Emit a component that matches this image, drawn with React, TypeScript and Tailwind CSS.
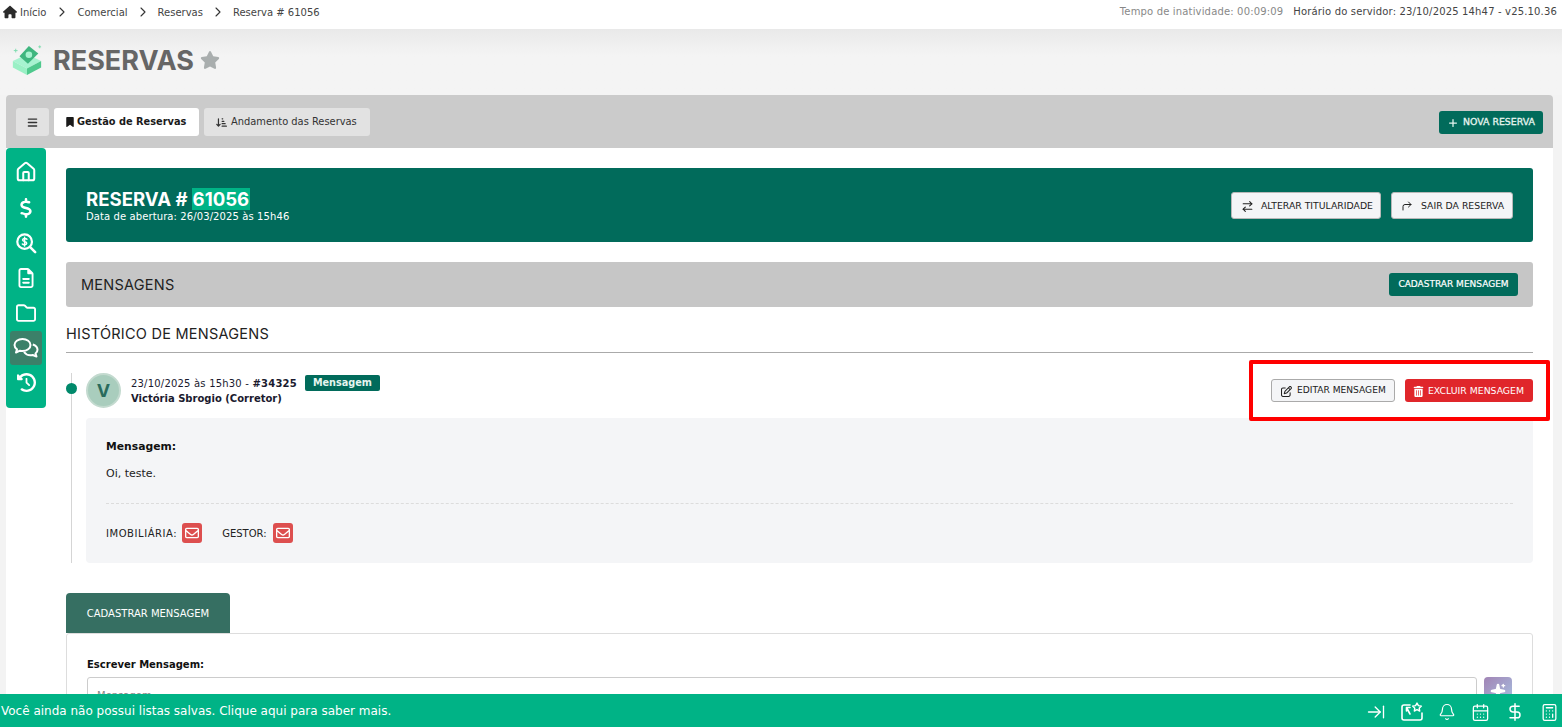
import {
  ArrowRightLeft,
  ArrowRightToLine,
  Bell,
  Calculator,
  CalendarDays,
  ChevronRight,
  CornerUpRight,
  DollarSign,
  House,
  Sparkles,
} from 'lucide-react'
import {
  FaArrowDownShortWide,
  FaBars,
  FaBookmark,
  FaClockRotateLeft,
  FaDollarSign,
  FaHouse,
  FaPlus,
  FaRegEnvelope,
  FaRegFileLines,
  FaRegFolder,
  FaRegPenToSquare,
  FaStar,
  FaTrashCan,
} from 'react-icons/fa6'

const body = "font-['DejaVu_Sans',Verdana,sans-serif]"
const heading = "font-['Inter',sans-serif]"

function Logo() {
  return (
    <svg width="32" height="32" viewBox="0 0 34 34" className="shrink-0">
      <path d="M2 18 L17 11 L32 18 L17 26 Z" fill="#a7f3d0" />
      <path d="M2 18 L17 26 V33 L2 25 Z" fill="#9af0c5" />
      <path d="M17 26 L32 18 V25 L17 33 Z" fill="#4fc98d" />
      <path d="M9 13 L19 2 L29 10 L18 21 Z" fill="#3fb67f" />
      <circle cx="19" cy="11.5" r="3.5" fill="#a7f3d0" />
      <path d="M3 7 h4 M5 5 v4 M29 3 h3 M30.5 1.5 v3" stroke="#7ddcaf" strokeWidth="1" />
    </svg>
  )
}

function SearchDollar() {
  return (
    <svg width="22" height="22" viewBox="0 0 24 24" fill="none" stroke="currentColor" strokeWidth="2.4" strokeLinecap="round">
      <circle cx="10.5" cy="10.5" r="8" />
      <path d="M16.5 16.5 L22 22" strokeWidth="2.8" />
      <path d="M13 7.8 C12 6.8 8.3 6.6 8.3 8.8 C8.3 11 12.8 9.8 12.8 12.2 C12.8 14.3 9 14.2 8 13.2 M10.5 5.6 V15.4" strokeWidth="1.6" />
    </svg>
  )
}

function Chats() {
  return (
    <svg width="26" height="22" viewBox="0 0 26 22" fill="none" stroke="currentColor" strokeWidth="2" strokeLinejoin="round">
      <path d="M9.5 2 C5 2 1.5 4.6 1.5 8 C1.5 9.8 2.5 11.3 4 12.4 L3 15.5 L7 13.7 C7.8 13.9 8.6 14 9.5 14 C14 14 17.5 11.4 17.5 8 C17.5 4.6 14 2 9.5 2 Z" />
      <path d="M19.8 7.5 C22.6 8.4 24.5 10.4 24.5 12.8 C24.5 14.3 23.7 15.6 22.5 16.6 L23.5 19.6 L19.7 18 C16.5 18.6 12.8 17.6 11 15" />
    </svg>
  )
}

function ListStar() {
  return (
    <svg width="22" height="20" viewBox="0 0 22 20" fill="none" stroke="currentColor" strokeWidth="1.6" strokeLinecap="round" strokeLinejoin="round">
      <path d="M9 3 H3 A2 2 0 0 0 1 5 V16 A2 2 0 0 0 3 18 H19 A2 2 0 0 0 21 16 V11" />
      <path d="M6 12 L2.5 5.5 M2.5 5.5 V9 M2.5 5.5 H6" transform="translate(3 0)" />
      <path d="M16 1 L17.4 3.6 L20.4 4.1 L18.2 6.2 L18.7 9 L16 7.7 L13.3 9 L13.8 6.2 L11.6 4.1 L14.6 3.6 Z" strokeWidth="1.4" />
    </svg>
  )
}

function SideItem({ children, active }: { children: React.ReactNode; active?: boolean }) {
  return (
    <div className={`flex h-[34px] w-[32px] items-center justify-center rounded-[3px] text-white ${active ? 'bg-[#3b8069]' : ''}`}>
      {children}
    </div>
  )
}

function Crumb({ children }: { children: React.ReactNode }) {
  return (
    <>
      <ChevronRight size={16} strokeWidth={1.6} className="mx-[7px] text-[#333]" />
      <span>{children}</span>
    </>
  )
}

export default function App() {
  return (
    <div className={`${body} relative flex h-[727px] w-[1562px] flex-col overflow-hidden bg-[#f3f3f3] text-[10px] text-[#1f2937]`}>
      {/* top bar */}
      <div className="z-10 flex h-[29px] shrink-0 items-start justify-between bg-white pl-[3px] pr-[5px] pt-[4px] text-[#444]">
        <div className="flex items-center">
          <FaHouse size={14} className="mr-[3px] text-[#2b2b2b]" />
          <span className="pr-[1px]">Início</span>
          <Crumb>Comercial</Crumb>
          <Crumb>Reservas</Crumb>
          <Crumb>Reserva # 61056</Crumb>
        </div>
        <div className="flex gap-[10px] leading-[15px] tracking-[0.16px]">
          <span className="text-[#888]">Tempo de inatividade: 00:09:09</span>
          <span>Horário do servidor: 23/10/2025 14h47 - v25.10.36</span>
        </div>
      </div>

      {/* title */}
      <div className="flex h-[66px] shrink-0 items-start bg-gradient-to-b from-[#e9e9e9] to-[#f4f4f4] to-40% pl-[11px] pt-[15px]">
        <Logo />
        <h1 className={`${heading} ml-[10px] mt-[-1px] text-[27px] font-bold leading-[36px] text-[#666]`}>RESERVAS</h1>
        <FaStar size={20} className="ml-[6px] mt-[6px] text-[#a9aeae]" />
      </div>

      {/* panel */}
      <div className="mx-[6px] mr-[9px] flex min-h-0 flex-1 flex-col">
        <div className="flex h-[53px] shrink-0 items-center justify-between rounded-t-[4px] bg-[#cbcbcb] pl-[10px] pr-[10px] pt-[1px]">
          <div className="flex items-center gap-[5px]">
            <div className="flex h-[28px] w-[33px] items-center justify-center rounded-[3px] bg-[#e2e2e2]">
              <FaBars size={11} className="text-[#333]" />
            </div>
            <div className="flex h-[28px] w-[145px] items-center gap-[2px] rounded-[3px] bg-white pl-[11px] text-[9.8px] font-bold text-[#1a1a1a]">
              <FaBookmark size={10} />
              Gestão de Reservas
            </div>
            <div className="flex h-[28px] w-[166px] items-center gap-[4px] rounded-[3px] bg-[#e2e2e2] pl-[12px] text-[9.9px] text-[#333]">
              <FaArrowDownShortWide size={11} />
              Andamento das Reservas
            </div>
          </div>
          <button className="flex h-[23px] w-[104px] items-center gap-[5px] rounded-[3px] bg-[#016b5b] pl-[9px] pt-[1px] text-[9.4px] text-[#e6f5f0] [-webkit-text-stroke:0.3px]">
            <FaPlus size={10} />
            NOVA RESERVA
          </button>
        </div>

        <div className="flex min-h-0 flex-1 flex-col overflow-hidden bg-white pl-[60px] pr-[20px] pt-[20px]">
          {/* banner */}
          <div className="flex h-[74px] shrink-0 items-center justify-between rounded-[3px] bg-[#016b5b] pl-[20px] pr-[20px] text-white">
            <div>
              <div className={`${heading} flex items-center gap-[4px] text-[18.6px] font-bold leading-[22px]`}>
                RESERVA #<span className="bg-[#00b386] px-[1px]">61056</span>
              </div>
              <div className="mt-[1px] text-[10px] leading-[12px] tracking-[0.1px]">Data de abertura: 26/03/2025 às 15h46</div>
            </div>
            <div className="flex gap-[10px] text-[9.3px] text-[#222]">
              <button className="flex h-[27px] w-[150px] items-center gap-[7px] rounded-[3px] border border-[#b8b8b8] bg-[#f4f5f7] pl-[9px] pt-[2px]">
                <ArrowRightLeft size={13} strokeWidth={2} />
                ALTERAR TITULARIDADE
              </button>
              <button className="flex h-[27px] w-[122px] items-center gap-[8px] rounded-[3px] border border-[#b8b8b8] bg-[#f4f5f7] pl-[9px] pt-[2px]">
                <CornerUpRight size={12} strokeWidth={2} />
                SAIR DA RESERVA
              </button>
            </div>
          </div>

          {/* section bar */}
          <div className="mt-[20px] flex h-[45px] shrink-0 items-center justify-between rounded-[3px] bg-[#c6c6c6] pl-[15px] pr-[15px]">
            <span className={`${heading} text-[14.5px] tracking-[0.25px] text-[#222]`}>MENSAGENS</span>
            <button className="flex h-[23px] w-[129px] items-center justify-center rounded-[3px] bg-[#016b5b] text-[9px] text-white [-webkit-text-stroke:0.2px]">
              CADASTRAR MENSAGEM
            </button>
          </div>

          <div className={`${heading} mt-[17px] h-[29px] shrink-0 border-b border-[#aaa] text-[14.5px] leading-[20px] tracking-[0.25px] text-[#222]`}>
            HISTÓRICO DE MENSAGENS
          </div>

          {/* timeline entry */}
          <div className="relative ml-[5px] shrink-0 pl-[15px] pt-[20px]">
            <span className="absolute bottom-0 left-0 top-[20px] w-px bg-[#d5d5d5]" />
            <span className="absolute left-[-5px] top-[30px] h-[11px] w-[11px] rounded-full bg-[#00896b]" />
            <div className="flex h-[45px] items-start justify-between">
              <div className="flex items-start gap-[10px]">
                <div className={`${heading} flex h-[35px] w-[35px] items-center justify-center rounded-full border-2 border-[#c3dacf] bg-[#a9cdbd] text-[18px] font-bold text-[#2a6b5c]`}>
                  V
                </div>
                <div className="pt-[2px] leading-[15px] text-[#1a1a2e]">
                  <div className="flex items-center">
                    <span className="tracking-[0.2px]">23/10/2025 às 15h30 -&nbsp;<b>#34325</b></span>
                    <span className="ml-[8px] rounded-[2px] bg-[#016b5b] px-[8px] text-[9.7px] font-bold leading-[16px] text-[#e6f5f0]">
                      Mensagem
                    </span>
                  </div>
                  <div className="font-bold">Victória Sbrogio (Corretor)</div>
                </div>
              </div>
              <div className="flex gap-[10px] pt-[6px] text-[9.1px]">
                <button className="flex h-[23px] w-[124px] items-center gap-[5px] rounded-[3px] border border-[#aaa] bg-[#f4f5f7] pl-[9px] pt-[1px] text-[#222]">
                  <FaRegPenToSquare size={11} />
                  EDITAR MENSAGEM
                </button>
                <button className="flex h-[23px] w-[128px] items-center gap-[4px] rounded-[3px] bg-[#e0262b] pl-[8px] pt-[1px] text-[9.3px] text-white">
                  <FaTrashCan size={11} />
                  EXCLUIR MENSAGEM
                </button>
              </div>
            </div>

            <div className="h-[145px] rounded-[4px] bg-[#f4f5f7] px-[20px] pt-[21px]">
              <div className="text-[10.8px] font-bold leading-[16px] text-[#111]">Mensagem:</div>
              <div className="mt-[11px] text-[11px] leading-[16px] text-[#222]">Oi, teste.</div>
              <div className="mt-[21px] border-t border-dashed border-[#dcdcdc]" />
              <div className="mt-[19px] flex items-center text-[#222]">
                <span className="tracking-[0.55px]">IMOBILIÁRIA:</span>
                <span className="ml-[5px] flex h-[20px] w-[20px] items-center justify-center rounded-[3px] bg-[#dd4f4f] text-white">
                  <FaRegEnvelope size={14} />
                </span>
                <span className="ml-[20px]">GESTOR:</span>
                <span className="ml-[6px] flex h-[20px] w-[20px] items-center justify-center rounded-[3px] bg-[#dd4f4f] text-white">
                  <FaRegEnvelope size={14} />
                </span>
              </div>
            </div>
          </div>

          {/* form */}
          <div className="mt-[30px] flex h-[40px] w-[164px] shrink-0 items-center justify-center rounded-t-[4px] bg-[#366f62] text-white">
            CADASTRAR MENSAGEM
          </div>
          <div className="h-[100px] shrink-0 rounded-[3px] border border-[#ddd] px-[20px] pt-[24px]">
            <div className="font-bold leading-[13px] text-[#111]">Escrever Mensagem:</div>
            <div className="mt-[6px] flex gap-[7px]">
              <div className="h-[50px] w-[1390px] rounded-[3px] border border-[#ccc] pl-[9px] pt-[10px] text-[#888]">
                Mensagem
              </div>
              <div className="flex h-[28px] w-[28px] items-center justify-center rounded-[4px] bg-gradient-to-br from-[#a184b5] to-[#a5c1e2] text-white">
                <Sparkles size={16} fill="currentColor" />
              </div>
            </div>
          </div>
        </div>
      </div>

      {/* side menu */}
      <div className="absolute left-[6px] top-[148px] flex h-[260px] w-[40px] flex-col items-center gap-[1px] rounded-[4px] bg-[#00b386] pt-[8px]">
        <SideItem><House size={22} strokeWidth={2.2} className="mt-[-2px]" /></SideItem>
        <SideItem><FaDollarSign size={20} /></SideItem>
        <SideItem><SearchDollar /></SideItem>
        <SideItem><FaRegFileLines size={20} /></SideItem>
        <SideItem><FaRegFolder size={20} /></SideItem>
        <SideItem active><Chats /></SideItem>
        <SideItem><FaClockRotateLeft size={19} className="mt-[-2px]" /></SideItem>
      </div>

      {/* highlight annotation */}
      <div className="pointer-events-none absolute left-[1249px] top-[360px] h-[61px] w-[301px] rounded-[2px] border-[4px] border-[#ff0000]" />

      {/* bottom bar */}
      <div className="absolute inset-x-0 bottom-0 flex h-[33px] items-center justify-between bg-[#00b386] pl-[1px] pr-[3px] text-[12px] text-white">
        <span>Você ainda não possui listas salvas. Clique aqui para saber mais.</span>
        <div className="flex items-center gap-[15px] pt-[3px]">
          <ArrowRightToLine size={20} strokeWidth={1.6} />
          <ListStar />
          <Bell size={18} strokeWidth={1.6} />
          <CalendarDays size={19} strokeWidth={1.6} />
          <DollarSign size={20} strokeWidth={1.8} />
          <Calculator size={19} strokeWidth={1.6} />
        </div>
      </div>
    </div>
  )
}
